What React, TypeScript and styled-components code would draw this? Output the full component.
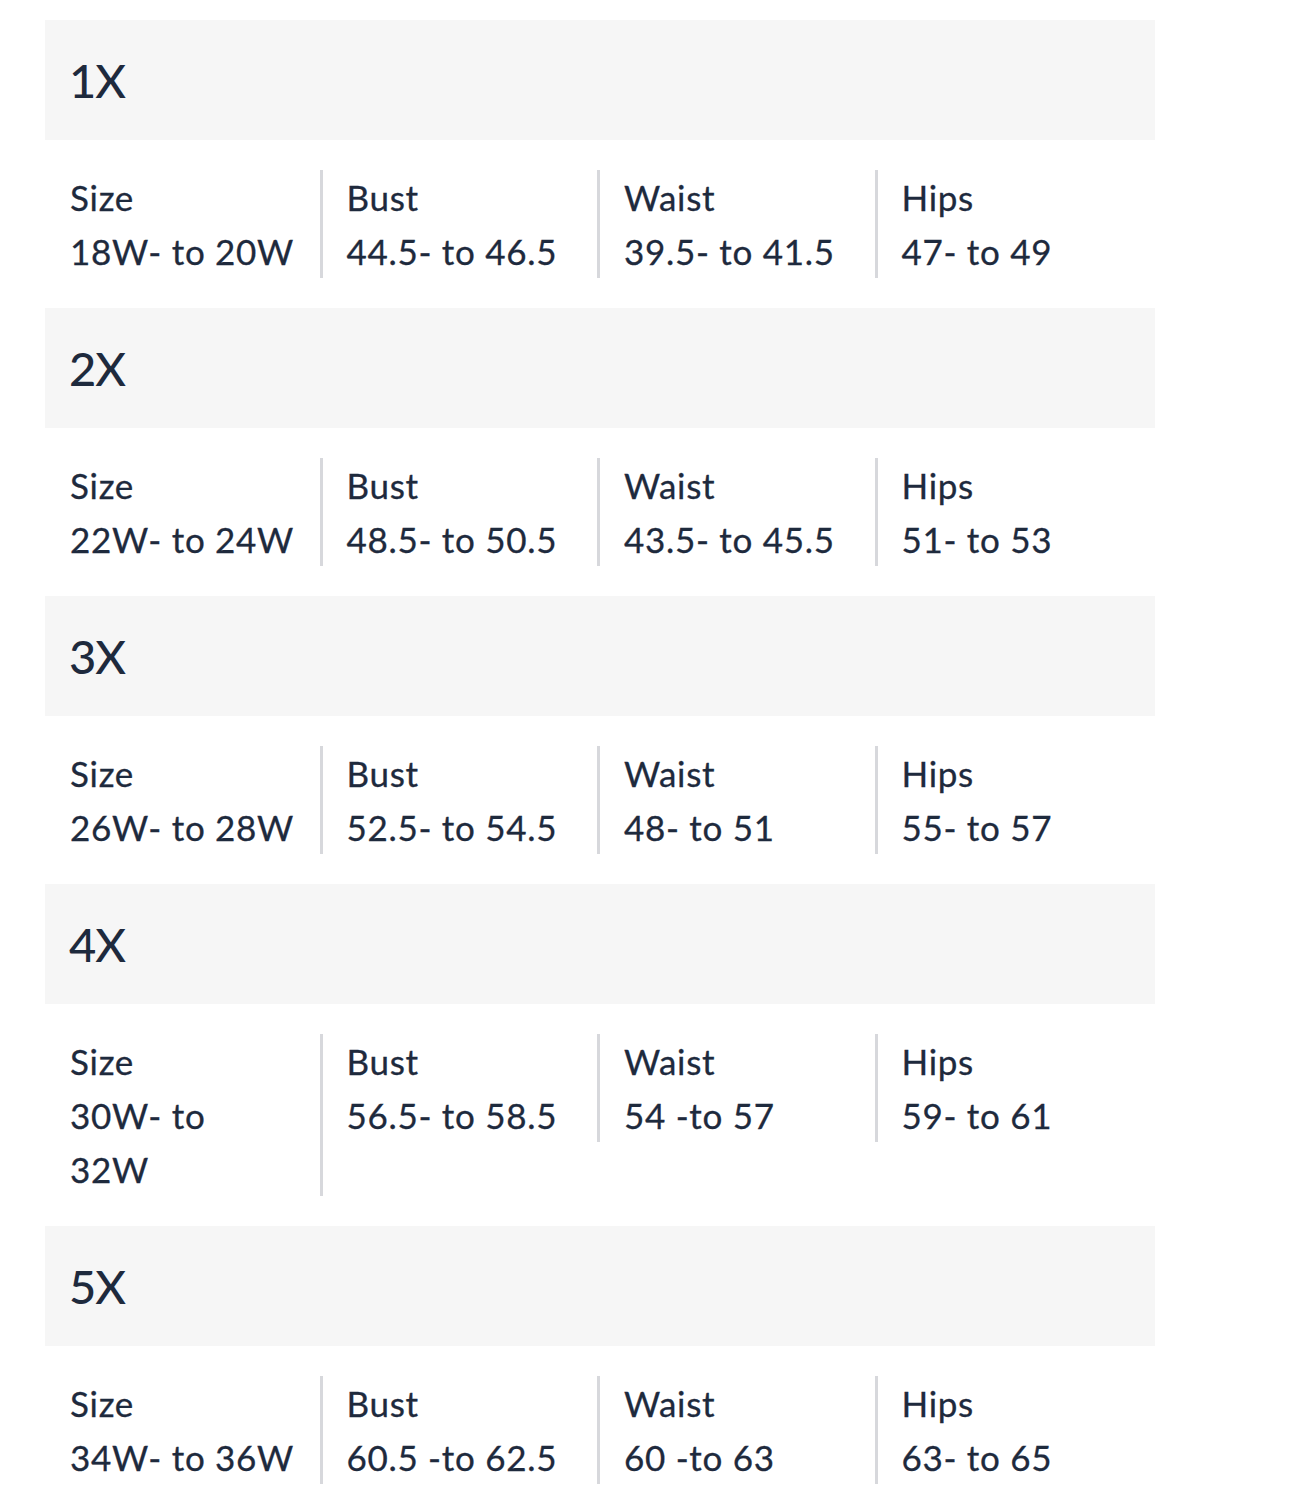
import React from "react";
import styled, { createGlobalStyle } from "styled-components";

const Global = createGlobalStyle`
  html, body { margin: 0; padding: 0; background: #ffffff; }
  body { font-family: Lato, "Noto Sans", Arial, sans-serif; color: #1e293b; }
`;

const Page = styled.div`
  width: 1110px;
  padding: 20px 0 0 45px;
`;

const Group = styled.section`
  display: flex;
  flex-direction: column;
`;

const Header = styled.div`
  height: 120px;
  background: #f6f6f6;
  display: flex;
  align-items: center;
  padding-left: 24px;
  font-size: 47px;
  font-weight: 500;
  color: #1e2a3d;
  letter-spacing: -1px;
`;

const Row = styled.div`
  display: grid;
  grid-template-columns: repeat(4, 1fr);
  align-items: start;
  padding: 30px 0;
`;

const Cell = styled.div<{ $last?: boolean }>`
  padding-left: 24px;
  border-right: ${(p) => (p.$last ? "none" : "3px solid #d7d8dc")};
  font-size: 35px;
  line-height: 54px;
  color: #1e2a3d;
  letter-spacing: 0.7px;
  -webkit-text-stroke: 0.3px #1e2a3d;
`;

const FirstCell = styled(Cell)`
  padding-left: 25px;
`;

const Line = styled.div``;

type Entry = { label: string; size: string[]; bust: string; waist: string; hips: string };

const data: Entry[] = [
  { label: "1X", size: ["18W- to 20W"], bust: "44.5- to 46.5", waist: "39.5- to 41.5", hips: "47- to 49" },
  { label: "2X", size: ["22W- to 24W"], bust: "48.5- to 50.5", waist: "43.5- to 45.5", hips: "51- to 53" },
  { label: "3X", size: ["26W- to 28W"], bust: "52.5- to 54.5", waist: "48- to 51", hips: "55- to 57" },
  { label: "4X", size: ["30W- to", "32W"], bust: "56.5- to 58.5", waist: "54 -to 57", hips: "59- to 61" },
  { label: "5X", size: ["34W- to 36W"], bust: "60.5 -to 62.5", waist: "60 -to 63", hips: "63- to 65" },
];

export default function App() {
  return (
    <>
      <Global />
      <Page>
        {data.map((d) => (
          <Group key={d.label}>
            <Header>{d.label}</Header>
            <Row>
              <FirstCell>
                <Line>Size</Line>
                {d.size.map((s) => (
                  <Line key={s}>{s}</Line>
                ))}
              </FirstCell>
              <Cell>
                <Line>Bust</Line>
                <Line>{d.bust}</Line>
              </Cell>
              <Cell>
                <Line>Waist</Line>
                <Line>{d.waist}</Line>
              </Cell>
              <Cell $last>
                <Line>Hips</Line>
                <Line>{d.hips}</Line>
              </Cell>
            </Row>
          </Group>
        ))}
      </Page>
    </>
  );
}
